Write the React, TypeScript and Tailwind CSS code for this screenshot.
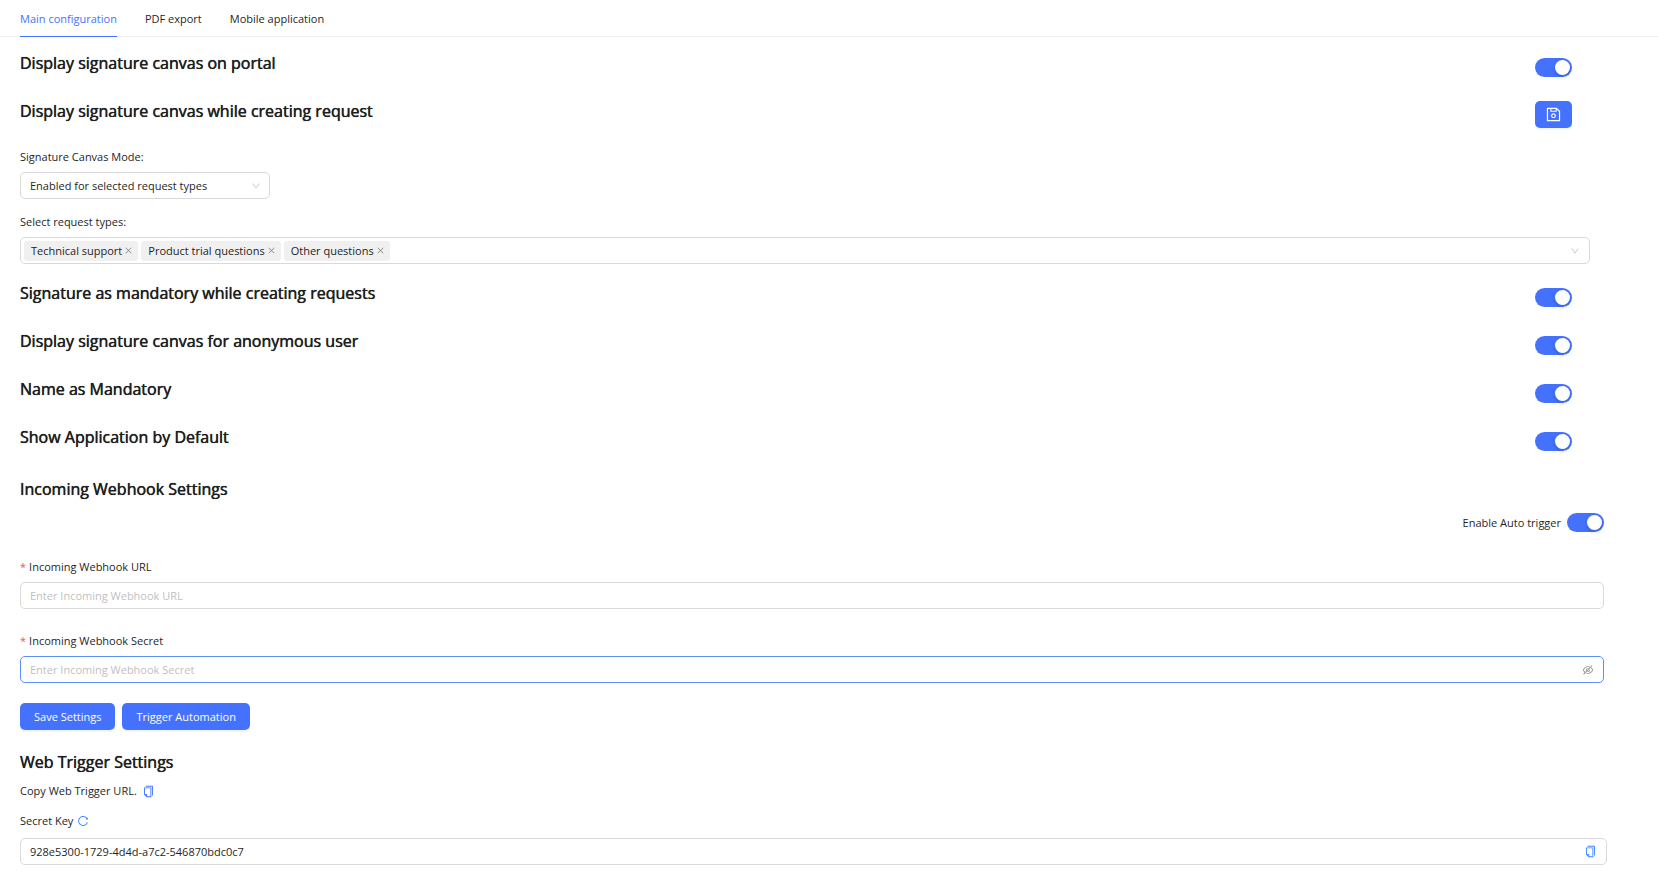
import { useState } from "react";
import type { ReactNode } from "react";
import {
  AiOutlineClose,
  AiOutlineCopy,
  AiOutlineDown,
  AiOutlineEye,
  AiOutlineEyeInvisible,
  AiOutlineReload,
  AiOutlineSave,
} from "react-icons/ai";

const TABS = ["Main configuration", "PDF export", "Mobile application"];
const REQUEST_TYPES = ["Technical support", "Product trial questions", "Other questions"];
const SECRET_KEY = "928e5300-1729-4d4d-a7c2-546870bdc0c7";

export default function App() {
  const [tab, setTab] = useState(TABS[0]);
  const [types, setTypes] = useState(REQUEST_TYPES);

  return (
    <div className="bg-white pb-7 font-['Open_Sans','Noto_Sans',sans-serif] text-[11px] leading-5 text-[#1f1f1f]">
      <nav role="tablist" className="flex gap-7 border-b border-[#f0f0f0] pl-5">
        {TABS.map((t) => (
          <button
            key={t}
            role="tab"
            aria-selected={t === tab}
            onClick={() => setTab(t)}
            className={
              t === tab
                ? "-mb-px border-b border-[#4472ff] pt-[9px] pb-[7px] text-[#4472ff]"
                : "-mb-px border-b border-transparent pt-[9px] pb-[7px]"
            }
          >
            {t}
          </button>
        ))}
      </nav>

      <main className="pt-3.5 pl-5">
        <SettingRow id="portal" title="Display signature canvas on portal" />
        <SettingRow title="Display signature canvas while creating request">
          <button
            aria-label="Save"
            className="mt-0.5 flex h-[27px] w-[37px] items-center justify-center rounded-[5px] bg-[#4472ff] text-white shadow-[0_2px_0_rgba(5,95,255,0.06)]"
          >
            <AiOutlineSave size={17} />
          </button>
        </SettingRow>

        <label htmlFor="mode" className="block">
          Signature Canvas Mode:
        </label>
        <div className="relative mt-[5px] w-[250px]">
          <select
            id="mode"
            className="block h-[27px] w-full appearance-none rounded-[5px] border border-[#d9d9d9] bg-white px-[9px] outline-none"
          >
            <option>Enabled for selected request types</option>
            <option>Enabled for all request types</option>
            <option>Disabled</option>
          </select>
          <AiOutlineDown
            size={10}
            className="pointer-events-none absolute top-[9px] right-[9px] text-[#bfbfbf]"
          />
        </div>

        <p id="types-label" className="mt-[13px]">
          Select request types:
        </p>
        <div
          role="group"
          aria-labelledby="types-label"
          className="mt-[5px] mr-[68px] flex h-[27px] items-center gap-[3px] rounded-[5px] border border-[#d9d9d9] pr-[9px] pl-[3px]"
        >
          {types.map((t) => (
            <span
              key={t}
              className="flex h-5 items-center gap-0.5 rounded-[3px] bg-[#f0f0f0] pr-[5px] pl-[7px]"
            >
              {t}
              <button
                aria-label={`Remove ${t}`}
                onClick={() => setTypes(types.filter((x) => x !== t))}
                className="text-[#8c8c8c]"
              >
                <AiOutlineClose size={9} />
              </button>
            </span>
          ))}
          <button aria-label="Show request types" className="ml-auto text-[#bfbfbf]">
            <AiOutlineDown size={10} />
          </button>
        </div>

        <div className="mt-[17px]">
          <SettingRow id="mandatory" title="Signature as mandatory while creating requests" />
          <SettingRow id="anonymous" title="Display signature canvas for anonymous user" />
          <SettingRow id="name" title="Name as Mandatory" />
          <SettingRow id="default" title="Show Application by Default" />
        </div>

        <WebhookSettings />
        <WebTriggerSettings />
      </main>
    </div>
  );
}

// Open Sans has no medium weight here, the zero-blur shadow thickens the regular one
function Heading({ children }: { children: ReactNode }) {
  return (
    <h2 className="text-base leading-6 font-medium [text-shadow:0_0_0_#1f1f1f,0_0_1px_#1f1f1f99]">
      {children}
    </h2>
  );
}

function Switch({ id }: { id: string }) {
  return (
    <input
      id={id}
      type="checkbox"
      role="switch"
      defaultChecked
      className="block h-[19px] w-[37px] shrink-0 cursor-pointer appearance-none rounded-full bg-[#bfbfbf] p-0.5 before:block before:size-[15px] before:rounded-full before:bg-white before:shadow-[0_2px_4px_rgba(0,35,11,0.2)] checked:bg-[#4472ff] checked:before:ml-[18px]"
    />
  );
}

// A heading on the left, a switch (or whatever is passed in) on the right
function SettingRow({ id, title, children }: { id?: string; title: string; children?: ReactNode }) {
  return (
    <div className="mr-[86px] flex h-12 items-start justify-between">
      <Heading>{id ? <label htmlFor={id}>{title}</label> : title}</Heading>
      {children}
      {id && (
        <div className="pt-[7px]">
          <Switch id={id} />
        </div>
      )}
    </div>
  );
}

function RequiredLabel({ htmlFor, children }: { htmlFor: string; children: ReactNode }) {
  return (
    <label htmlFor={htmlFor} className="flex gap-[3px]">
      <span className="text-[#ff4d4f]">*</span>
      {children}
    </label>
  );
}

function WebhookSettings() {
  const [visible, setVisible] = useState(false);

  return (
    <section className="mt-1 mr-[54px]">
      <Heading>Incoming Webhook Settings</Heading>
      <div className="mt-3 flex h-[19px] items-center justify-end gap-1.5">
        <label htmlFor="auto">Enable Auto trigger</label>
        <Switch id="auto" />
      </div>

      <div className="mt-[25px]">
        <RequiredLabel htmlFor="url">Incoming Webhook URL</RequiredLabel>
        <input
          id="url"
          placeholder="Enter Incoming Webhook URL"
          className="mt-[5px] block h-[27px] w-full rounded-[5px] border border-[#d9d9d9] px-[9px] outline-none placeholder:text-[#bfbfbf]"
        />
      </div>

      <div className="mt-[22px]">
        <RequiredLabel htmlFor="secret">Incoming Webhook Secret</RequiredLabel>
        <div className="mt-[5px] flex h-[27px] items-center rounded-[5px] border border-[#5b8ff9] px-[9px]">
          <input
            id="secret"
            type={visible ? "text" : "password"}
            placeholder="Enter Incoming Webhook Secret"
            className="min-w-0 flex-1 outline-none placeholder:text-[#bfbfbf]"
          />
          <button
            aria-label="Toggle secret visibility"
            onClick={() => setVisible(!visible)}
            className="text-[#8c8c8c]"
          >
            {visible ? <AiOutlineEye size={12} /> : <AiOutlineEyeInvisible size={12} />}
          </button>
        </div>
      </div>

      <div className="mt-5 flex gap-[7px]">
        <PrimaryButton>Save Settings</PrimaryButton>
        <PrimaryButton>Trigger Automation</PrimaryButton>
      </div>
    </section>
  );
}

function PrimaryButton({ children }: { children: ReactNode }) {
  return (
    <button className="h-[27px] rounded-[5px] bg-[#4472ff] px-3.5 text-white shadow-[0_2px_0_rgba(5,95,255,0.06)]">
      {children}
    </button>
  );
}

function WebTriggerSettings() {
  return (
    <section className="mt-5 mr-[51px]">
      <Heading>Web Trigger Settings</Heading>
      <p className="mt-[7px] flex items-center gap-[5px]">
        Copy Web Trigger URL.
        <button aria-label="Copy web trigger URL" className="text-[#4472ff]">
          <AiOutlineCopy size={13} />
        </button>
      </p>
      <div className="mt-2.5 flex items-center gap-1">
        <label htmlFor="key">Secret Key</label>
        <button aria-label="Regenerate secret key" className="text-[#3f87ff]">
          <AiOutlineReload size={12} />
        </button>
      </div>
      <div className="mt-[7px] flex h-[27px] items-center rounded-[5px] border border-[#d9d9d9] px-[9px]">
        <input id="key" readOnly value={SECRET_KEY} className="min-w-0 flex-1 outline-none" />
        <button aria-label="Copy secret key" className="text-[#3f87ff]">
          <AiOutlineCopy size={13} />
        </button>
      </div>
    </section>
  );
}
